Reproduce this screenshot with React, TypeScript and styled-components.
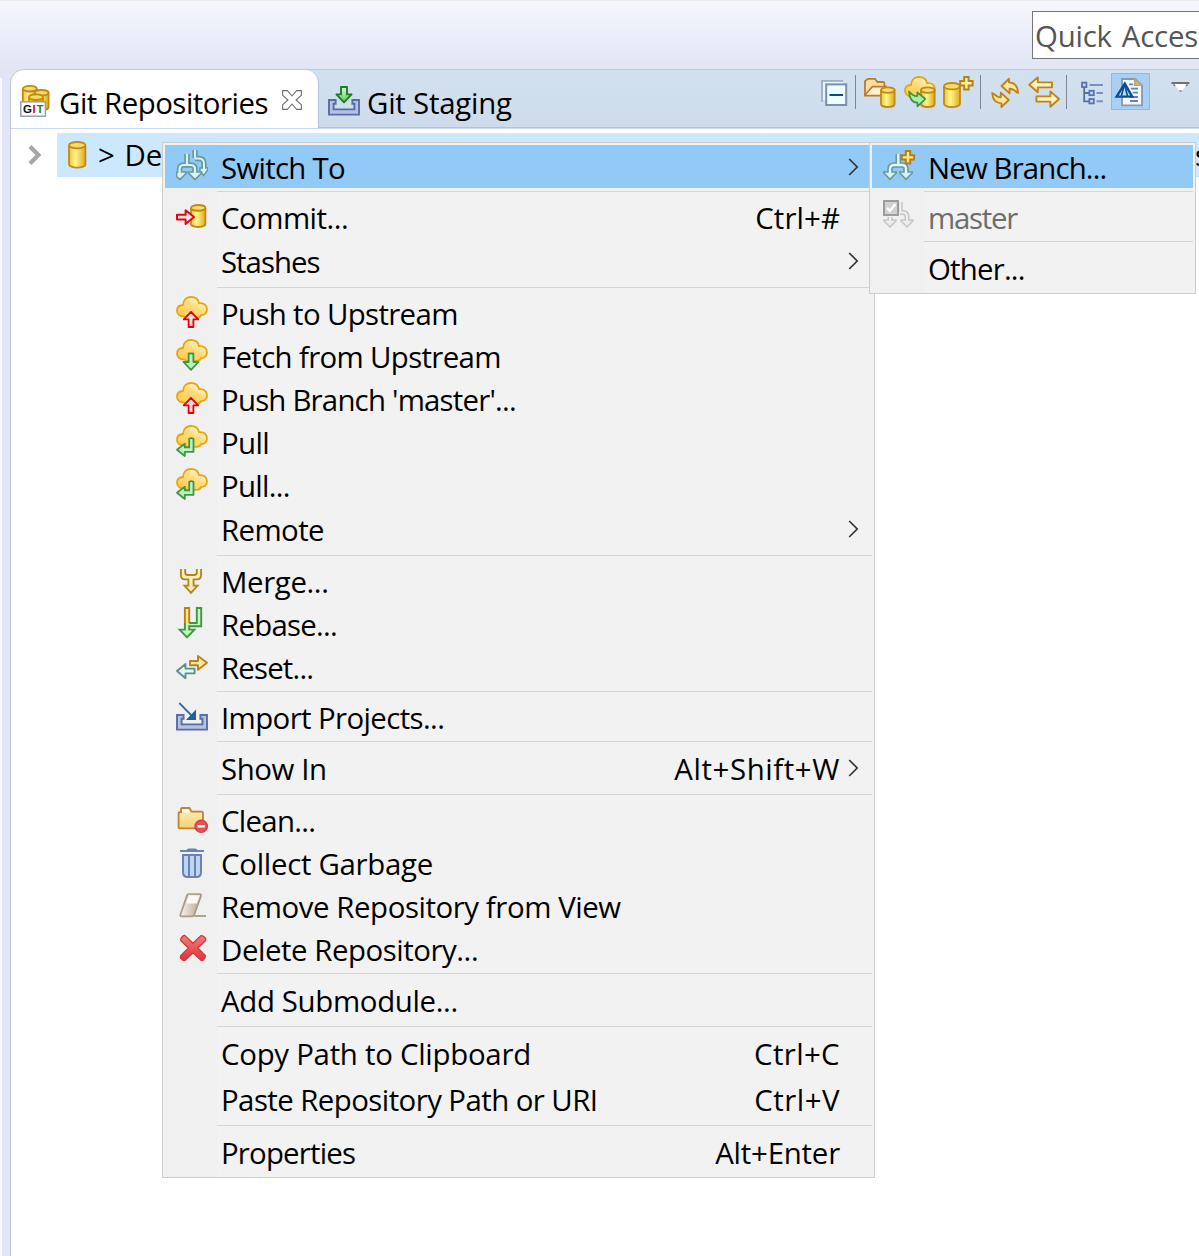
import React from "react";
import styled, { createGlobalStyle } from "styled-components";

const Global = createGlobalStyle`
  * { box-sizing: border-box; }
  html, body { margin: 0; padding: 0; overflow: hidden; }
  svg { display: block; flex: none; }
`;

const Window = styled.div`
  position: relative;
  width: 1199px;
  height: 1256px;
  overflow: hidden;
  display: flex;
  flex-direction: column;
  background: #e1e5f5;
  color: #000;
  font-family: "Open Sans", "Noto Sans", sans-serif;
  font-size: 29.4px;
  white-space: pre;
`;

const TopBar = styled.div`
  height: 69px;
  flex: none;
  display: flex;
  justify-content: flex-end;
  padding-top: 11px;
  border-top: 1px solid #ececf0;
  background: linear-gradient(#f6f7fc, #eef0fa 35%, #e2e5f4);
`;

const QuickAccess = styled.div`
  width: 167px;
  height: 48px;
  margin-top: -1px;
  overflow: hidden;
  border: 1px solid #767676;
  border-right: 0;
  background: #fff;
  color: #555;
  padding: 2px 0 0 2px;
  line-height: 44px;
  letter-spacing: -0.2px;
  word-spacing: 2.5px;
`;

const Body = styled.div`
  flex: 1;
  display: flex;
`;

const NeighbourEdge = styled.div`
  width: 2px;
  margin-top: 9px;
  background: #f7f9fe;
`;

const View = styled.div`
  flex: 1;
  margin-left: 8px;
  border-left: 1px solid #c0c6d4;
  border-top: 1px solid #c3c9d5;
  border-top-left-radius: 14px;
  background: #fff;
  overflow: hidden;
`;

const TabStrip = styled.div`
  display: flex;
  height: 59px;
  background: linear-gradient(#d2e1ef, #cddbec);
`;

const Tab = styled.div<{ $active?: boolean }>`
  display: flex;
  width: ${(p) => (p.$active ? 308 : 200)}px;
  padding-left: 9px;
  background: ${(p) => (p.$active ? "#fff" : "transparent")};
  border-bottom: 1px solid ${(p) => (p.$active ? "#c9dbee" : "transparent")};
  border-right: ${(p) => (p.$active ? "1px solid #b4c2d6" : "0")};
  border-radius: ${(p) => (p.$active ? "13px 13px 0 0" : "0")};
`;

const TabIcon = styled.div`
  width: 32px;
  padding-top: 15px;
`;

const TabTitle = styled.div<{ $ls: number }>`
  padding: 12px 0 0 7px;
  line-height: 43px;
  letter-spacing: ${(p) => p.$ls}px;
`;

const CloseBox = styled.div`
  padding: 20px 0 0 14px;
`;

const Inactive = styled.div`
  flex: 1;
  display: flex;
  border-bottom: 1px solid #b4c2d6;
  margin-bottom: 1px;
`;

const ToolBar = styled.div`
  display: flex;
  align-items: flex-start;
  padding-top: 3px;
  margin-left: auto;
  width: 381px;
`;

const Tool = styled.div<{ $gap?: number }>`
  width: 32px;
  margin: 3px 0 0 ${(p) => p.$gap ?? 8}px;
`;

const ToggledTool = styled.div`
  width: 39px;
  height: 37px;
  margin-left: 3px;
  padding: 3px 0 0 2px;
  border: 1px solid #7fbdf2;
  background: #a9d0f2;
`;

const ToolDivider = styled.div<{ $gap: number }>`
  width: 1px;
  height: 34px;
  margin: 2px 0 0 ${(p) => p.$gap}px;
  background: #7b8794;
`;

const TreeRow = styled.div`
  display: flex;
  height: 44px;
  margin-top: 4px;
`;

const Expander = styled.div`
  width: 46px;
  padding: 12px 0 0 17px;
`;

const TreeItem = styled.div`
  flex: 1;
  display: flex;
  background: #cce8ff;
  padding: 6px 0 0 4px;
`;

const TreeText = styled.div`
  margin: -5px 0 0 5px;
  line-height: 43px;
  word-spacing: 2px;
  flex: 1;
`;

const TreeTail = styled.div`
  width: 4px;
  margin-top: -5px;
  line-height: 43px;
  overflow: hidden;
`;

const Popup = styled.div<{ $x: number; $w: number; $h: number }>`
  position: absolute;
  left: ${(p) => p.$x}px;
  top: 142px;
  width: ${(p) => p.$w}px;
  height: ${(p) => p.$h}px;
  padding: 2px;
  border: 1px solid #cccccc;
  background: linear-gradient(90deg, #f0f0f0 54px, #f2f2f2 54px);
`;

const MenuRow = styled.div<{ $h: number; $on?: boolean; $off?: boolean }>`
  display: flex;
  height: ${(p) => p.$h}px;
  padding: ${(p) => (p.$h === 46 ? 3 : 2)}px 0 0 11px;
  line-height: 43px;
  background: ${(p) => (p.$on ? "#91c9f7" : "transparent")};
  color: ${(p) => (p.$off ? "#6d6d6d" : "#000")};
`;

const IconCell = styled.div`
  width: 45px;
  height: 32px;
  padding-top: 3px;
`;

const Label = styled.div<{ $ls: number }>`
  flex: 1;
  letter-spacing: ${(p) => p.$ls}px;
`;

const Shortcut = styled.div<{ $ls: number }>`
  letter-spacing: ${(p) => p.$ls}px;
`;

const ArrowCell = styled.div`
  width: 32px;
  padding: 11px 0 0 8px;
`;

const Divider = styled.div`
  height: 1px;
  margin: 3px 0 3px 52px;
  background: #d5d5d5;
`;

const PaintDefs = styled.svg`
  position: absolute;
  width: 0;
  height: 0;
`;

const Svg = ({ children, w = 32, h = 32 }: { children: React.ReactNode; w?: number; h?: number }) => (
  <svg width={w} height={h} viewBox={`0 0 ${w} ${h}`} fill="none">
    {children}
  </svg>
);

const Gradients = () => (
  <PaintDefs>
    <defs>
      <linearGradient id="gold">
        <stop offset="0" stopColor="#f0c23c" />
        <stop offset=".4" stopColor="#fff68c" />
        <stop offset="1" stopColor="#e3a91c" />
      </linearGradient>
      <linearGradient id="cloud" x1="0" y1="1" x2=".8" y2="0">
        <stop offset=".2" stopColor="#ffcf57" />
        <stop offset=".6" stopColor="#ffdb7c" />
        <stop offset="1" stopColor="#fffdf0" />
      </linearGradient>
      <linearGradient id="folder" x1="0" y1="0" x2="0" y2="1">
        <stop offset="0" stopColor="#fff1bd" />
        <stop offset="1" stopColor="#f6cf76" />
      </linearGradient>
      <linearGradient id="cross" x1="0" y1="0" x2="0" y2="1">
        <stop offset="0" stopColor="#f08078" />
        <stop offset="1" stopColor="#e03038" />
      </linearGradient>
      <linearGradient id="green" x1="0" y1="0" x2="0" y2="1">
        <stop offset="0" stopColor="#d5fbcf" />
        <stop offset="1" stopColor="#5fc662" />
      </linearGradient>
      <linearGradient id="rubber" x1="0" y1="0" x2="1" y2="0">
        <stop offset="0" stopColor="#f6f3ee" />
        <stop offset="1" stopColor="#b6a48c" />
      </linearGradient>
    </defs>
  </PaintDefs>
);

const Cylinder = ({ x, y, w, h }: { x: number; y: number; w: number; h: number }) => {
  const r = w / 2;
  const e = Math.min(3.2, w / 5);
  return (
    <g stroke="#c08a14" strokeWidth="1.8">
      <path d={`M${x} ${y + e}V${y + h - e}A${r} ${e} 0 0 0 ${x + w} ${y + h - e}V${y + e}`} fill="url(#gold)" />
      <ellipse cx={x + r} cy={y + e} rx={r} ry={e} fill="#f7dc6a" />
    </g>
  );
};

const Cloud = () => (
  <path
    d="M8 20.5C3.5 20.5 1 18 1 14.8C1 11.5 3.4 9.2 7 9C7.2 4 10.5 1 15 1C19.4 1 22.3 3.4 23 7.2C27.8 6.4 31 9.6 31 13.2C31 17 28.5 19.3 25 19.2C24.3 21 23 21.8 21 21.8H12C10.5 21.8 9.5 21.4 8 20.5Z"
    fill="url(#cloud)"
    stroke="#e6a70c"
    strokeWidth="1.8"
  />
);

const PushIcon = () => (
  <Svg>
    <Cloud />
    <path d="M15 15.8L22.2 23.4H17.4V31H12.6V23.4H7.8Z" fill="#ffd6d6" stroke="#d9040c" strokeWidth="1.8" strokeLinejoin="round" />
  </Svg>
);

const FetchIcon = () => (
  <Svg>
    <Cloud />
    <path d="M12.6 14.5H17.4V23H22.5L15 30.8L7.5 23H12.6Z" fill="#b9f3bd" stroke="#439546" strokeWidth="1.8" strokeLinejoin="round" />
  </Svg>
);

const PullIcon = () => (
  <Svg>
    <Cloud />
    <path d="M13.2 13.8Q15.3 12.4 17.5 13.8V26.8H8.8V31L1 24.7L8.8 18.6V22.4H13.2Z" fill="#b9f3bd" stroke="#439546" strokeWidth="1.8" strokeLinejoin="round" />
  </Svg>
);

const teal = "#6b989a";

const BranchIcon = () => (
  <Svg>
    <path d="M19 0V8M19 8.5H23Q28 8.5 28 14V18" stroke={teal} strokeWidth="5.4" />
    <path d="M24 18H32V19.4L27.6 25.6L24 21Z" fill="#d4f3f6" stroke={teal} strokeWidth="1.5" />
    <path d="M19 0V8M19 8.5H23Q28 8.5 28 14V20" stroke="#d4f3f6" strokeWidth="2" />
    <path d="M11 4V15M3.6 21V19Q3.6 15 8 15H14.5Q19 15 19 19V22" stroke={teal} strokeWidth="5.6" />
    <path d="M.6 22H10.4V23L4 29.6L.6 26.5ZM12.4 22H25.6V23L19 29.6L12.4 23Z" fill="#d4f7f6" stroke={teal} strokeWidth="1.6" />
    <path d="M11 4V15M3.6 24V19Q3.6 15 8 15H14.5Q19 15 19 19V24" stroke="#d4f3f6" strokeWidth="2.2" />
  </Svg>
);

const NewBranchIcon = () => (
  <Svg>
    <path d="M15.3 4V16M7 22V19Q7 15 11 15H19Q23 15 23 19V22" stroke={teal} strokeWidth="5.6" />
    <path d="M.8 22H13.2V23L7 29.4L.8 23ZM16.8 22H29.2V23L23 29.4L16.8 23Z" fill="#cff5f3" stroke={teal} strokeWidth="1.6" />
    <path d="M15.3 4V15M7 24V19Q7 15 11 15H19Q23 15 23 19V24" stroke="#e0f6fa" strokeWidth="2.4" />
    <path d="M22.8 1H27.2V5.2H31.2V9.4H27.2V13.4H22.8V9.4H18.8V5.2H22.8Z" fill="#ffe891" stroke="#b47e12" strokeWidth="2" />
  </Svg>
);

const CheckedBranchIcon = () => (
  <Svg>
    <path d="M17.3 2V12M7 20V17M17 12.5H20Q24 12.5 24 17V20" stroke="#c6c6c6" strokeWidth="5" />
    <path d="M1 20H13V21L7 27L1 21ZM18 20H29.8V21L24 27L18 21Z" fill="#ececec" stroke="#c6c6c6" strokeWidth="1.5" />
    <path d="M17.3 2V12M7 22V17M17 12.5H20Q24 12.5 24 17V22" stroke="#f0f0f0" strokeWidth="2" />
    <rect x="1" y="1" width="14" height="14" fill="#d2d2d2" stroke="#9c9c9c" strokeWidth="2" />
    <path d="M4 8L6.8 11L12.4 4" stroke="#fff" strokeWidth="2.4" />
  </Svg>
);

const CommitIcon = () => (
  <Svg>
    <Cylinder x={15} y={5} w={14.4} h={22} />
    <path d="M1 14.8H9.6V10.2L18 17L9.6 24V19.6H1Z" fill="#ffe1df" stroke="#dc0a10" strokeWidth="2" strokeLinejoin="round" />
  </Svg>
);

const MergeIcon = () => (
  <Svg>
    <path
      d="M4.9 5V11Q4.9 15.4 9 15.4H12.4V21.6H8.5L15 28.8L21.5 21.6H17.6V15.4H21Q25.1 15.4 25.1 11V5M20.8 5V8.6Q20.8 11 18.4 11H11.6Q9.2 11 9.2 8.6V5"
      fill="#fff0c0"
      fillRule="evenodd"
      stroke="#b8841c"
      strokeWidth="1.9"
    />
  </Svg>
);

const RebaseIcon = () => (
  <Svg>
    <path d="M8.9 16V1H13.2V16" fill="#ffe28a" stroke="#b8801a" strokeWidth="1.9" />
    <path d="M8.9 16V22.6H3.6L11 30.4L18.4 22.6H13.2V19.2H25.2V1H20.8V16H13.2" fill="#c0f7bd" stroke="#439546" strokeWidth="1.9" />
  </Svg>
);

const ResetIcon = () => (
  <Svg>
    <path d="M14 11H22V6L31 12.8L22 19.8V15.2H14Z" fill="#ffe9a8" stroke="#bb8114" strokeWidth="1.9" strokeLinejoin="round" />
    <path d="M18.6 18.6H9.5V14L1 21L9.5 28.2V23.4H18.6Z" fill="#e2fafa" stroke="#5e8e90" strokeWidth="1.9" strokeLinejoin="round" />
  </Svg>
);

const Tray = () => (
  <path d="M1 15H7.6V18.8H5.6V24.4H26.4V18.8H24.4V15H31V29.6H1Z" fill="#b6c2e0" stroke="#566ea8" strokeWidth="1.9" />
);

const ImportIcon = () => (
  <Svg>
    <Tray />
    <path d="M3.3 3L16 16" stroke="#2e6fae" strokeWidth="1.8" />
    <path d="M20 9.6V20H10Z" fill="#225f9e" />
  </Svg>
);

const StagingIcon = () => (
  <Svg>
    <Tray />
    <path d="M13 2H19V9.4H23.6L16 17.4L8.4 9.4H13Z" fill="url(#green)" stroke="#198022" strokeWidth="1.9" strokeLinejoin="round" />
  </Svg>
);

const CleanIcon = () => (
  <Svg>
    <path d="M5 9V6Q5 5 6 5H13.5L15.4 8.6H25.5Q27 8.6 27 10V24Q27 25.4 25.5 25.4H4Q2.6 25.4 2.6 24V10.5Q2.6 9 5 9Z" fill="url(#folder)" stroke="#bf8132" strokeWidth="1.8" />
    <path d="M6 9.6Q6 6.4 8 6.4H12.6L14 9.4Z" fill="#fffdf2" />
    <circle cx="25.2" cy="23.3" r="6.2" fill="#e85058" stroke="#d03844" strokeWidth="1.2" />
    <path d="M21.6 23.3H28.8" stroke="#fff" strokeWidth="2.4" />
  </Svg>
);

const TrashIcon = () => (
  <Svg>
    <path d="M4 5H28" stroke="#6683b3" strokeWidth="2" />
    <path d="M10.5 4Q11 2.4 13 2.4H19Q21 2.4 21.5 4Z" fill="#6683b3" />
    <path d="M7 9H25V26Q25 31 20.5 31H11.5Q7 31 7 26Z" fill="#bfd5ef" stroke="#6683b3" strokeWidth="2" />
    <path d="M13 9V30M19 9V30" stroke="#6683b3" strokeWidth="2" />
  </Svg>
);

const EraserIcon = () => (
  <Svg>
    <path d="M12.8 5H23.5Q25.6 5 25 7L18.2 25.8Q17.5 27.4 16 27.4H6Q3.6 27.4 4.6 25L11 6.4Q11.5 5 12.8 5Z" fill="url(#rubber)" stroke="#a89a82" strokeWidth="1.7" />
    <path d="M13 6.2H24L21 14.6H10.2Z" fill="#fbfaf7" />
    <path d="M18.3 27H30" stroke="#a89a82" strokeWidth="1.8" />
  </Svg>
);

const DeleteIcon = () => (
  <Svg>
    <path
      d="M9 3.6L17 11.3L25 3.6Q27.4 3.2 29.6 6.4Q30 8 29.4 8.8L21.8 16L29.4 23.6Q29.8 26 27 28.4Q25.6 29 25 28.4L17 20.8L9 28.4Q7 29 4.6 26Q4.2 24.4 4.8 23.6L12.4 16L4.8 8.6Q4.2 6.4 7 3.9Q8.2 3.2 9 3.6Z"
      fill="url(#cross)"
      stroke="#d0393c"
      strokeWidth="1.3"
    />
  </Svg>
);

const GitIcon = () => (
  <Svg>
    <Cylinder x={2.8} y={0.9} w={14} h={18} />
    <Cylinder x={14.6} y={5} w={14} h={20} />
    <Cylinder x={9} y={9.4} w={14} h={14} />
    <rect x=".8" y="16.8" width="24.6" height="14.4" fill="#fff" stroke="#909aa8" strokeWidth="1.4" />
    <g fontFamily="Liberation Sans, sans-serif" fontWeight="bold" fontSize="11.5">
      <text x="3" y="28.2" fill="#111">G</text>
      <text x="12.6" y="28.2" fill="#d01020">I</text>
      <text x="16.4" y="28.2" fill="#168a20">T</text>
    </g>
  </Svg>
);

const CloseIcon = () => (
  <Svg w={20} h={20}>
    <path
      d="M.6 .6H5.4L10 6L14.6 .6H19.4V5.2L14 10L19.4 14.8V19.4H14.6L10 14L5.4 19.4H.6V14.8L6 10L.6 5.2Z"
      fill="#fff"
      stroke="#707070"
      strokeWidth="1.1"
    />
  </Svg>
);

const CollapseIcon = () => (
  <Svg>
    <path d="M4 26V4.8H25" stroke="#a0aec4" strokeWidth="1.8" />
    <rect x="5" y="6" width="20" height="18" fill="#e4f4fc" />
    <rect x="8.2" y="8.4" width="20" height="20.6" fill="#f0fbff" stroke="#7d8fb0" strokeWidth="2" />
    <path d="M11.5 19H25" stroke="#0b4c86" strokeWidth="2.2" />
  </Svg>
);

const FolderRepoIcon = () => (
  <Svg>
    <path d="M1 19V5.5Q1 4.4 2 4.4L4 2.8H11L13.4 6H19Q20.4 6 20.4 7.4V19Z" fill="#f9dda6" stroke="#ba7b2c" strokeWidth="1.8" />
    <path d="M1 19L8.4 10.6H22V19.6H1Z" fill="#fff2cc" stroke="#ba7b2c" strokeWidth="1.6" />
    <Cylinder x={17} y={11.4} w={13.6} h={19.6} />
  </Svg>
);

const CloneIcon = () => (
  <Svg>
    <Cloud />
    <Cylinder x={17} y={11.4} w={13.6} h={19.6} />
    <path d="M5 15.6Q9.6 20.6 13.4 20V16.4L21.4 23L13.4 30.4V26.6Q6 27 5 15.6Z" fill="#a9edac" stroke="#3f9444" strokeWidth="1.7" strokeLinejoin="round" />
  </Svg>
);

const AddRepoIcon = () => (
  <Svg>
    <Cylinder x={1} y={7} w={16} h={24} />
    <path d="M21.2 1H25.6V5H29.6V9.4H25.6V13.4H21.2V9.4H17.2V5H21.2Z" fill="#fff0a8" stroke="#b68216" strokeWidth="2" />
  </Svg>
);

const RefreshIcon = () => (
  <Svg>
    <g fill="#ffe7a0" stroke="#c08416" strokeWidth="1.9" strokeLinejoin="round">
      <path d="M12.6 10L20 2.8V6.4Q28.6 6.6 29 17L25.6 14.6Q23.4 12.8 20.6 12.8V17.4Z" />
      <path d="M19.8 24L12.4 31V27.4Q3.6 27 3.2 17L6.8 19.4Q9 21.2 11.8 21.2V16.6Z" />
    </g>
  </Svg>
);

const ExchangeIcon = () => (
  <Svg>
    <g fill="#fff2c4" stroke="#c08416" strokeWidth="1.9" strokeLinejoin="round">
      <path d="M1.2 8.8L9.8 1.4V6.4H24V11.4H9.8V16.2Z" />
      <path d="M31 23L22.4 15.4V20.4H8.4V25.6H22.4V30.8Z" />
    </g>
  </Svg>
);

const HierarchyIcon = () => (
  <Svg>
    <path d="M8.2 11V25.4H13M8.2 17H13" stroke="#53709f" strokeWidth="1.8" />
    <g stroke="#5672ad" strokeWidth="1.8" fill="#cbdcf5">
      <rect x="6" y="6.6" width="4.4" height="4.4" />
      <rect x="13.4" y="14.8" width="4.4" height="4.4" />
      <rect x="13.4" y="23" width="4.4" height="4.4" />
    </g>
    <path d="M13.5 9H27M20.5 17H27M20.5 25.2H27" stroke="#7b90c2" strokeWidth="2" />
  </Svg>
);

const LinkedDocIcon = () => (
  <Svg>
    <path d="M8 2H21L28 8.4V28.4H8Z" fill="#f3f9ff" stroke="#8596b8" strokeWidth="1.8" />
    <path d="M20.6 2V8.4H28Z" fill="#d8b769" stroke="#b5a477" strokeWidth="1.4" />
    <path d="M15 7.4H19M17 11.6H24M18.6 15.6H24M16 20H24M16 24H24" stroke="#6680b8" strokeWidth="1.8" />
    <path d="M10.8 6.6L18.2 19.6H2.6Z" fill="#b7ddf5" stroke="#0b4f8c" strokeWidth="2.4" />
    <path d="M10.6 7L13.4 19M10 9L7.4 19" stroke="#0b4f8c" strokeWidth="1.6" />
  </Svg>
);

const ViewMenuIcon = () => (
  <Svg>
    <path d="M7.5 7.4H21.5L16 14.6H13Z" fill="#fff" />
    <path d="M5.4 7H23.4" stroke="#707070" strokeWidth="2" />
    <path d="M7.5 8.4L9 10M21.5 8.4L20 10M13.4 15H15.6" stroke="#808080" strokeWidth="1.6" />
  </Svg>
);

const RepoIcon = () => (
  <Svg>
    <Cylinder x={8} y={3} w={16.4} h={25.6} />
  </Svg>
);

const ExpanderIcon = () => (
  <Svg w={14} h={20}>
    <path d="M2 1.6L10.4 10L2 18.4" stroke="#a6a6a6" strokeWidth="4.2" />
  </Svg>
);

const SubmenuArrow = () => (
  <Svg w={12} h={18}>
    <path d="M1.2 1L9.2 9L1.2 17" stroke="#333" strokeWidth="1.7" />
  </Svg>
);

type Entry = {
  text: string;
  ls: number;
  h?: number;
  icon?: React.ReactNode;
  keys?: string;
  keysLs?: number;
  more?: boolean;
  on?: boolean;
  off?: boolean;
};

const mainMenu: Entry[][] = [
  [{ text: "Switch To", ls: -0.71, icon: <BranchIcon />, more: true, on: true }],
  [
    { text: "Commit...", ls: -0.5, h: 44, icon: <CommitIcon />, keys: "Ctrl+#", keysLs: 0.1 },
    { text: "Stashes", ls: -1, h: 45, more: true },
  ],
  [
    { text: "Push to Upstream", ls: -0.65, icon: <PushIcon /> },
    { text: "Fetch from Upstream", ls: -0.66, icon: <FetchIcon /> },
    { text: "Push Branch 'master'...", ls: -0.79, icon: <PushIcon /> },
    { text: "Pull", ls: -0.65, icon: <PullIcon /> },
    { text: "Pull...", ls: -0.72, h: 44, icon: <PullIcon /> },
    { text: "Remote", ls: -0.6, h: 45, more: true },
  ],
  [
    { text: "Merge...", ls: -0.38, icon: <MergeIcon /> },
    { text: "Rebase...", ls: -0.74, icon: <RebaseIcon /> },
    { text: "Reset...", ls: -0.82, icon: <ResetIcon /> },
  ],
  [{ text: "Import Projects...", ls: -0.61, icon: <ImportIcon /> }],
  [{ text: "Show In", ls: -0.4, h: 46, keys: "Alt+Shift+W", keysLs: 0.6, more: true }],
  [
    { text: "Clean...", ls: -0.7, icon: <CleanIcon /> },
    { text: "Collect Garbage", ls: -0.28, icon: <TrashIcon /> },
    { text: "Remove Repository from View", ls: -0.43, icon: <EraserIcon /> },
    { text: "Delete Repository...", ls: -0.45, icon: <DeleteIcon /> },
  ],
  [{ text: "Add Submodule...", ls: -0.34, h: 46 }],
  [
    { text: "Copy Path to Clipboard", ls: -0.27, h: 46, keys: "Ctrl+C", keysLs: 0.36 },
    { text: "Paste Repository Path or URI", ls: -0.56, h: 46, keys: "Ctrl+V", keysLs: 0.5 },
  ],
  [{ text: "Properties", ls: -0.81, h: 46, keys: "Alt+Enter", keysLs: -0.2 }],
];

const switchMenu: Entry[][] = [
  [{ text: "New Branch...", ls: -0.87, icon: <NewBranchIcon />, on: true }],
  [{ text: "master", ls: -1.25, icon: <CheckedBranchIcon />, off: true }],
  [{ text: "Other...", ls: -0.8, h: 46 }],
];

const MenuItems = ({ groups }: { groups: Entry[][] }) => (
  <>
    {groups.map((group, g) => (
      <React.Fragment key={g}>
        {g > 0 && <Divider />}
        {group.map((e) => (
          <MenuRow key={e.text} $h={e.h ?? 43} $on={e.on} $off={e.off}>
            <IconCell>{e.icon}</IconCell>
            <Label $ls={e.ls}>{e.text}</Label>
            {e.keys && <Shortcut $ls={e.keysLs ?? 0}>{e.keys}</Shortcut>}
            <ArrowCell>{e.more && <SubmenuArrow />}</ArrowCell>
          </MenuRow>
        ))}
      </React.Fragment>
    ))}
  </>
);

export default function App() {
  return (
    <Window>
      <Global />
      <Gradients />
      <TopBar>
        <QuickAccess>Quick Access</QuickAccess>
      </TopBar>
      <Body>
        <NeighbourEdge />
        <View>
          <TabStrip>
            <Tab $active>
              <TabIcon><GitIcon /></TabIcon>
              <TabTitle $ls={-0.48}>Git Repositories</TabTitle>
              <CloseBox><CloseIcon /></CloseBox>
            </Tab>
            <Inactive>
              <Tab>
                <TabIcon><StagingIcon /></TabIcon>
                <TabTitle $ls={-0.22}>Git Staging</TabTitle>
              </Tab>
              <ToolBar>
                <Tool $gap={0}><CollapseIcon /></Tool>
                <ToolDivider $gap={5} />
                <Tool><FolderRepoIcon /></Tool>
                <Tool><CloneIcon /></Tool>
                <Tool $gap={7}><AddRepoIcon /></Tool>
                <ToolDivider $gap={5} />
                <Tool><RefreshIcon /></Tool>
                <Tool $gap={7}><ExchangeIcon /></Tool>
                <ToolDivider $gap={6} />
                <Tool $gap={9}><HierarchyIcon /></Tool>
                <ToggledTool><LinkedDocIcon /></ToggledTool>
                <Tool $gap={16}><ViewMenuIcon /></Tool>
              </ToolBar>
            </Inactive>
          </TabStrip>
          <TreeRow>
            <Expander><ExpanderIcon /></Expander>
            <TreeItem>
              <RepoIcon />
              <TreeText>{"> De"}</TreeText>
              <TreeTail>s</TreeTail>
            </TreeItem>
          </TreeRow>
        </View>
      </Body>
      <Popup $x={162} $w={713} $h={1036}>
        <MenuItems groups={mainMenu} />
      </Popup>
      <Popup $x={869} $w={327} $h={152}>
        <MenuItems groups={switchMenu} />
      </Popup>
    </Window>
  );
}
